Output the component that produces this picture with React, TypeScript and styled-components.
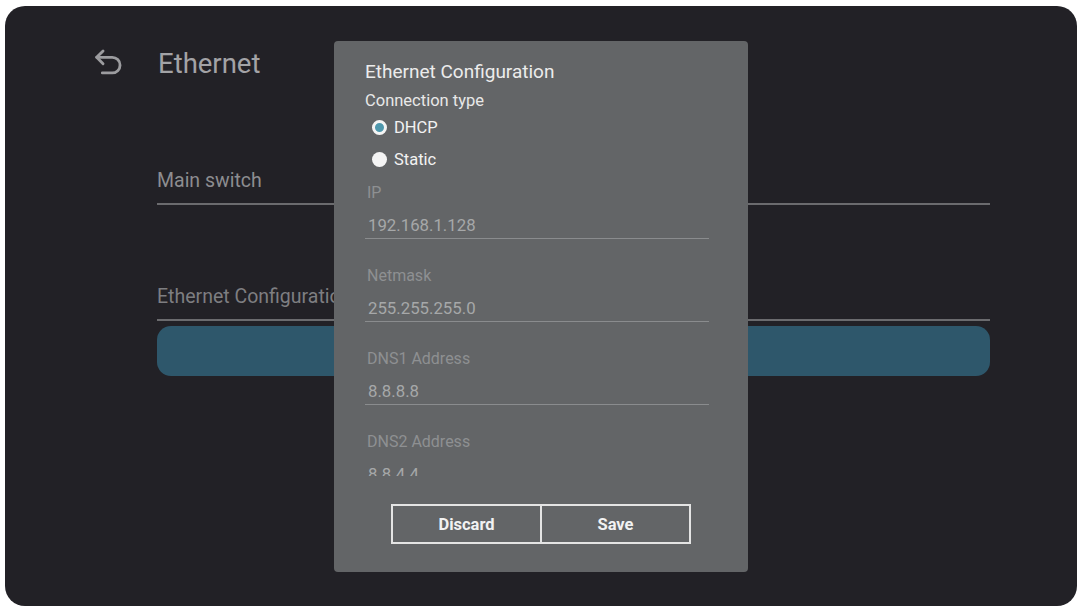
import styled, { createGlobalStyle } from 'styled-components'

const GlobalStyle = createGlobalStyle`
  body {
    margin: 0;
    background: #ffffff;
    font-family: Roboto, "Liberation Sans", Arial, sans-serif;
  }
`

const Page = styled.div`
  padding: 6px 2px 3px 5px;
`

const Screen = styled.div`
  position: relative;
  height: 600px;
  background: #222126;
  border-radius: 20px;
  padding: 37px 87px 0 86px;
  box-sizing: border-box;
  overflow: hidden;
`

const Header = styled.div`
  display: flex;
  align-items: center;
  height: 40px;
  gap: 33px;
`

const Title = styled.h1`
  margin: 0;
  font-size: 27.5px;
  font-weight: 400;
  color: #a3a3a6;
`

const List = styled.div`
  margin-left: 66px;
  padding-top: 86px;
  display: flex;
  flex-direction: column;
`

const Row = styled.div<{ $gap: number }>`
  margin-top: ${p => p.$gap}px;
  font-size: 19.5px;
  line-height: 24px;
  color: ${p => (p.$gap ? '#7e7e81' : '#8d8d90')};
  padding-bottom: 10px;
  border-bottom: 2px solid #6b6b6e;
  white-space: nowrap;
`

const Focus = styled.div`
  margin-top: 5px;
  height: 50px;
  border-radius: 14px;
  background: #2e576b;
`

const Overlay = styled.div`
  position: absolute;
  inset: 0;
  display: flex;
  align-items: center;
  justify-content: center;
`

const Dialog = styled.div`
  width: 414px;
  height: 531px;
  margin-top: 1px;
  background: #636567;
  border-radius: 4px;
  box-sizing: border-box;
  padding-top: 18px;
  display: flex;
  flex-direction: column;
`

const Body = styled.div`
  padding: 0 39px 0 31px;
`

const DialogTitle = styled.div`
  font-size: 19px;
  line-height: 26px;
  color: #ececec;
`

const Label = styled.div`
  margin-top: 6px;
  font-size: 16.5px;
  line-height: 20px;
  color: #e8e8e8;
`

const RadioRow = styled.div`
  display: flex;
  align-items: center;
  height: 32px;
  padding-left: 7px;
  gap: 7px;
  font-size: 16.5px;
  color: #f2f2f2;
`

const Dot = styled.span<{ $on?: boolean }>`
  width: 15px;
  height: 15px;
  border-radius: 50%;
  box-sizing: border-box;
  background: ${p => (p.$on ? '#4f98ad' : '#f4f4f4')};
  border: ${p => (p.$on ? '3px solid #f4f4f4' : 'none')};
`

const Fields = styled.div`
  height: 295px;
  margin-top: 6px;
  overflow: hidden;
`

const Field = styled.div`
  margin-bottom: 25px;
`

const FieldName = styled.div`
  padding-left: 2px;
  font-size: 16px;
  line-height: 24px;
  color: #8e9092;
`

const FieldValue = styled.div`
  margin-top: 8px;
  padding-left: 3px;
  font-size: 16.8px;
  line-height: 24px;
  color: #a6a8a9;
  border-bottom: 1px solid #8a8c8e;
  padding-bottom: 1px;
`

const Buttons = styled.div`
  margin-top: 28px;
  display: flex;
  justify-content: center;
`

const Button = styled.button<{ $first?: boolean }>`
  width: 150px;
  height: 40px;
  background: transparent;
  border: 2px solid #e4e4e4;
  ${p => (p.$first ? 'border-right: 1px solid #e4e4e4;' : 'border-left: 1px solid #e4e4e4;')}
  font-family: Roboto, "Liberation Sans", Arial, sans-serif;
  font-size: 16.5px;
  font-weight: 700;
  color: #f2f2f2;
`

function BackIcon() {
  return (
    <svg width="34" height="34" viewBox="0 0 24 24" fill="none" stroke="#9c9c9f" strokeWidth="2" strokeLinecap="round" strokeLinejoin="round">
      <path d="M8.5 12.5 4 8l4.5-4.5" />
      <path d="M4 8h11a5.5 5.5 0 0 1 0 11H8" />
    </svg>
  )
}

const fields = [
  { name: 'IP', value: '192.168.1.128' },
  { name: 'Netmask', value: '255.255.255.0' },
  { name: 'DNS1 Address', value: '8.8.8.8' },
  { name: 'DNS2 Address', value: '8.8.4.4' },
]

function App() {
  return (
    <Page>
      <GlobalStyle />
      <Screen>
        <Header>
          <BackIcon />
          <Title>Ethernet</Title>
        </Header>
        <List>
          <Row $gap={0}>Main switch</Row>
          <Row $gap={80}>Ethernet Configuration</Row>
          <Focus />
        </List>
        <Overlay>
          <Dialog>
            <Body>
              <DialogTitle>Ethernet Configuration</DialogTitle>
              <Label>Connection type</Label>
              <RadioRow><Dot $on />DHCP</RadioRow>
              <RadioRow><Dot />Static</RadioRow>
              <Fields>
                {fields.map(f => (
                  <Field key={f.name}>
                    <FieldName>{f.name}</FieldName>
                    <FieldValue>{f.value}</FieldValue>
                  </Field>
                ))}
              </Fields>
            </Body>
            <Buttons>
              <Button $first>Discard</Button>
              <Button>Save</Button>
            </Buttons>
          </Dialog>
        </Overlay>
      </Screen>
    </Page>
  )
}

export default App
